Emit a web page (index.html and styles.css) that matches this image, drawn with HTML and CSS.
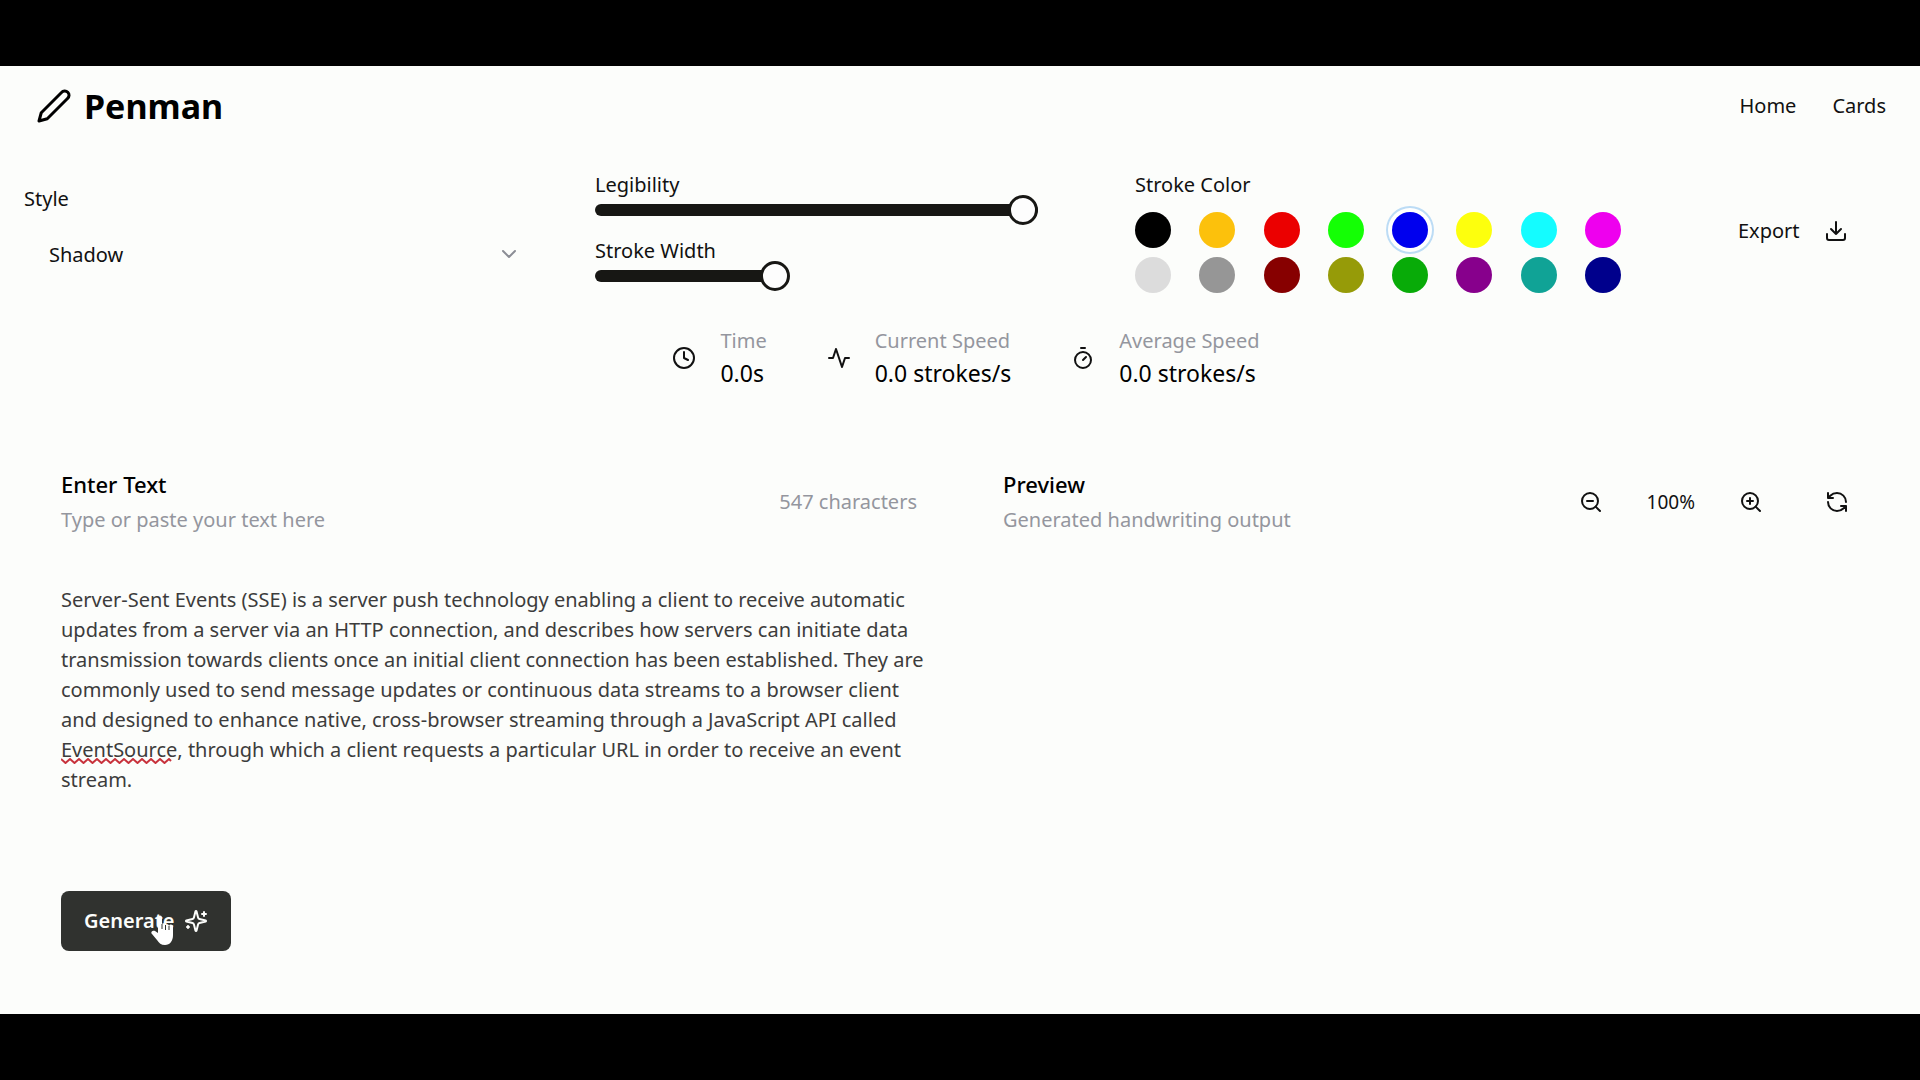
FILE: index.html
```html
<!DOCTYPE html>
<html lang="en">
<head>
<meta charset="utf-8">
<title>Penman</title>
<link rel="stylesheet" href="styles.css">
</head>
<body>
<div class="app">
  <header class="header">
    <div class="brand">
      <svg class="icon brand-icon" viewBox="0 0 24 24" aria-hidden="true"><path d="M17 3a2.850 2.830 0 1 1 4 4L7.500 20.500 2 22l1.500-5.500Z"/></svg>
      <h1 class="brand-name">Penman</h1>
    </div>
    <nav class="nav"><a href="#home">Home</a><a href="#cards">Cards</a></nav>
  </header>

  <section class="controls">
    <div class="style-field">
      <label for="style">Style</label>
      <div class="select-wrap">
        <select id="style" class="select"><option>Shadow</option></select>
        <svg class="icon chevron" viewBox="0 0 24 24" aria-hidden="true"><path d="m6 9 6 6 6-6"/></svg>
      </div>
    </div>
    <div class="sliders">
      <div class="slider-field">
        <label for="legibility">Legibility</label>
        <input id="legibility" class="slider" type="range" min="0" max="100" value="100" style="--fill:100%">
      </div>
      <div class="slider-field">
        <label for="width">Stroke Width</label>
        <input id="width" class="slider" type="range" min="0" max="100" value="40" style="--fill:40%">
      </div>
    </div>
    <fieldset class="colors">
      <legend>Stroke Color</legend>
      <div class="swatches">
        <input class="swatch black" type="radio" name="color" aria-label="Black">
        <input class="swatch amber" type="radio" name="color" aria-label="Amber">
        <input class="swatch red" type="radio" name="color" aria-label="Red">
        <input class="swatch lime" type="radio" name="color" aria-label="Lime">
        <input class="swatch blue" type="radio" name="color" aria-label="Blue" checked>
        <input class="swatch yellow" type="radio" name="color" aria-label="Yellow">
        <input class="swatch cyan" type="radio" name="color" aria-label="Cyan">
        <input class="swatch magenta" type="radio" name="color" aria-label="Magenta">
        <input class="swatch silver" type="radio" name="color" aria-label="Silver">
        <input class="swatch gray" type="radio" name="color" aria-label="Gray">
        <input class="swatch maroon" type="radio" name="color" aria-label="Maroon">
        <input class="swatch olive" type="radio" name="color" aria-label="Olive">
        <input class="swatch green" type="radio" name="color" aria-label="Green">
        <input class="swatch purple" type="radio" name="color" aria-label="Purple">
        <input class="swatch teal" type="radio" name="color" aria-label="Teal">
        <input class="swatch navy" type="radio" name="color" aria-label="Navy">
      </div>
    </fieldset>
    <button class="export" type="button">Export
      <svg class="icon" viewBox="0 0 24 24" aria-hidden="true"><path d="M21 15v4a2 2 0 0 1-2 2H5a2 2 0 0 1-2-2v-4M7 10l5 5 5-5M12 15V3"/></svg>
    </button>
  </section>

  <section class="stats">
    <div class="stat">
      <svg class="icon" viewBox="0 0 24 24" aria-hidden="true"><circle cx="12" cy="12" r="10"/><path d="M12 6v6l4 2"/></svg>
      <div><p class="muted">Time</p><p class="stat-value">0.0s</p></div>
    </div>
    <div class="stat">
      <svg class="icon" viewBox="0 0 24 24" aria-hidden="true"><path d="M22 12h-4l-3 9L9 3l-3 9H2"/></svg>
      <div><p class="muted">Current Speed</p><p class="stat-value">0.0 strokes/s</p></div>
    </div>
    <div class="stat">
      <svg class="icon" viewBox="0 0 24 24" aria-hidden="true"><path d="M10 2h4M12 14l3-3"/><circle cx="12" cy="14" r="8"/></svg>
      <div><p class="muted">Average Speed</p><p class="stat-value">0.0 strokes/s</p></div>
    </div>
  </section>

  <main class="panels">
    <section class="panel">
      <div class="panel-head">
        <div><h2><label for="source">Enter Text</label></h2><p class="muted">Type or paste your text here</p></div>
        <span class="muted">547 characters</span>
      </div>
      <div class="editor">
        <textarea id="source" class="source" rows="8">Server-Sent Events (SSE) is a server push technology enabling a client to receive automatic updates from a server via an HTTP connection, and describes how servers can initiate data transmission towards clients once an initial client connection has been established. They are commonly used to send message updates or continuous data streams to a browser client and designed to enhance native, cross-browser streaming through a JavaScript API called EventSource, through which a client requests a particular URL in order to receive an event stream.</textarea>
        <svg class="squiggle" viewBox="0 0 115 6" aria-hidden="true"><path d="M0 1l4.500 4 4.500-4 4.500 4 4.500-4 4.500 4 4.500-4 4.500 4 4.500-4 4.500 4 4.500-4 4.500 4 4.500-4 4.500 4 4.500-4 4.500 4 4.500-4 4.500 4 4.500-4 4.500 4 4.500-4 4.500 4 4.500-4 4.500 4 4.500-4 2 2"/></svg>
      </div>
      <button class="generate" type="button">Generate
        <svg class="icon" viewBox="0 0 24 24" aria-hidden="true"><path d="M9.940 15.500A2 2 0 0 0 8.500 14.060l-6.140-1.580a.5.5 0 0 1 0-.96L8.500 9.940A2 2 0 0 0 9.940 8.500l1.580-6.140a.5.5 0 0 1 .96 0L14.060 8.500A2 2 0 0 0 15.500 9.940l6.140 1.580a.5.5 0 0 1 0 .96L15.500 14.060a2 2 0 0 0-1.440 1.440l-1.580 6.140a.5.5 0 0 1-.96 0zM20 3v4M22 5h-4M4 17v2M5 18H3"/></svg>
        <svg class="pointer" viewBox="0 0 24 31" aria-hidden="true"><path d="M8 2.500a2 2 0 0 1 4 0V9a2 2 0 0 1 3.500 1 2 2 0 0 1 3.500 1 2 2 0 0 1 4 1.500V20c0 6-3 10-8 10-4 0-6-2-8-5l-5-6c-2-2 1-4 3-3l3 2z"/><path class="pointer-gap" d="M12 9v5M15.500 10v5M19 11v4"/></svg>
      </button>
    </section>
    <section class="panel">
      <div class="panel-head">
        <div><h2>Preview</h2><p class="muted">Generated handwriting output</p></div>
        <div class="tools">
          <button type="button" aria-label="Zoom out"><svg class="icon" viewBox="0 0 24 24" aria-hidden="true"><circle cx="11" cy="11" r="8"/><path d="m21 21-4.350-4.350M8 11h6"/></svg></button>
          <span class="zoom-level">100%</span>
          <button type="button" aria-label="Zoom in"><svg class="icon" viewBox="0 0 24 24" aria-hidden="true"><circle cx="11" cy="11" r="8"/><path d="m21 21-4.350-4.350M11 8v6M8 11h6"/></svg></button>
          <button class="refresh" type="button" aria-label="Regenerate"><svg class="icon" viewBox="0 0 24 24" aria-hidden="true"><path d="M21 12a9 9 0 0 0-9-9 9.750 9.750 0 0 0-6.740 2.740L3 8M3 3v5h5M3 12a9 9 0 0 0 9 9 9.750 9.750 0 0 0 6.740-2.740L21 16M16 16h5v5"/></svg></button>
        </div>
      </div>
    </section>
  </main>
</div>
</body>
</html>
```
FILE: styles.css
```css
* { box-sizing: border-box; }

body {
  margin: 0;
  padding: 66px 0;
  min-height: 100vh;
  background: #000;
  color: #111;
  font: 20px/30px "Noto Sans", "Open Sans", sans-serif;
}

h1, h2, p { margin: 0; }

button, select, textarea {
  border: 0;
  padding: 0;
  background: none;
  color: inherit;
  font: inherit;
}

a { color: inherit; text-decoration: none; }

.app {
  min-height: calc(100vh - 132px);
  background: #fcfdfb;
}

.icon {
  flex: none;
  width: 24px;
  height: 24px;
  fill: none;
  stroke: currentColor;
  stroke-width: 2;
  stroke-linecap: round;
  stroke-linejoin: round;
}

.muted { color: #94969e; }

.header {
  display: flex;
  align-items: center;
  justify-content: space-between;
  padding: 16px 34px;
}

.brand { display: flex; align-items: center; gap: 12px; padding-left: 2px; color: #000; }
.brand-icon { width: 36px; height: 36px; }
.brand-name { font-size: 34px; line-height: 48px; }
.nav { display: flex; gap: 36px; }

.controls {
  display: grid;
  grid-template-columns: 571fr 540fr 603fr 158fr;
  align-items: start;
  padding: 24px;
}

.style-field { padding: 14px 74px 0 0; }
.select-wrap { position: relative; margin-top: 16px; }
.select {
  appearance: none;
  width: 100%;
  height: 50px;
  padding: 0 25px;
}
.chevron {
  position: absolute;
  top: 12px;
  right: 0;
  color: #8b8d95;
}

.sliders { padding-right: 97px; }
.slider-field { display: grid; height: 66px; align-content: start; }
.slider {
  appearance: none;
  width: 100%;
  height: 12px;
  margin: 4px 0;
  border-radius: 6px;
  background: linear-gradient(#171714, #171714) no-repeat 0 0 / var(--fill) 100%;
}
.slider::-webkit-slider-thumb {
  appearance: none;
  width: 30px;
  height: 30px;
  border: 3px solid #171714;
  border-radius: 50%;
  background: #fdfdfd;
}

.colors { margin: 0; padding: 0 89px 0 0; border: 0; min-width: 0; }
.colors legend { padding: 0; }
.swatches {
  display: grid;
  grid-template-columns: repeat(8, 1fr);
  gap: 9px 0;
  padding-top: 12px;
}
.swatch {
  appearance: none;
  width: 36px;
  height: 36px;
  margin: 0;
  border-radius: 50%;
}
.swatch:checked { box-shadow: 0 0 0 4px #fff, 0 0 0 6px #bcdcf5; }
.black { background: #000; }
.amber { background: #fcc10c; }
.red { background: #eb0000; }
.lime { background: #14ff05; }
.blue { background: #0000ee; }
.yellow { background: #fdff0d; }
.cyan { background: #14fcff; }
.magenta { background: #ee00ee; }
.silver { background: #dcdcdc; }
.gray { background: #969696; }
.maroon { background: #870000; }
.olive { background: #969b08; }
.green { background: #08ab08; }
.purple { background: #87008c; }
.teal { background: #10a396; }
.navy { background: #00008c; }

.export {
  display: flex;
  align-items: center;
  gap: 24px;
  margin-top: 46px;
}

.stats {
  display: flex;
  justify-content: center;
  gap: 60px;
  padding-left: 12px;
}
.stat { display: flex; align-items: center; gap: 24px; }
.stat-value { color: #000; font-size: 23px; line-height: 34px; }

.panels {
  display: grid;
  grid-template-columns: 1fr 1fr;
  gap: 86px;
  padding: 76px 61px 62px;
}
.panel-head {
  display: flex;
  align-items: center;
  justify-content: space-between;
}
.panel h2 { color: #000; font-size: 22px; font-weight: 500; line-height: 36px; }
.panel-head .muted { line-height: 36px; }

.tools { display: flex; align-items: center; gap: 44px; padding-right: 10px; }
.tools button { display: flex; }
.zoom-level { font-size: 19px; }
.refresh { margin-left: 18px; }

.editor { position: relative; margin-top: 47px; }
.source {
  display: block;
  width: calc(100% + 12px);
  color: #3c3c3c;
  resize: none;
  overflow: hidden;
  outline: 0;
}
.squiggle {
  position: absolute;
  top: 173px;
  left: 0;
  width: 115px;
  height: 6px;
  fill: none;
  stroke: #c8323c;
  stroke-width: 2;
}

.generate {
  position: relative;
  display: flex;
  align-items: center;
  gap: 10px;
  height: 60px;
  margin-top: 66px;
  padding: 0 23px;
  border-radius: 8px;
  background: #30322f;
  color: #fcfdfb;
  font-weight: 600;
}
.pointer {
  position: absolute;
  top: 24px;
  left: 89px;
  width: 24px;
  height: 31px;
  fill: #fff;
}
.pointer-gap { stroke: #30322f; }
```
